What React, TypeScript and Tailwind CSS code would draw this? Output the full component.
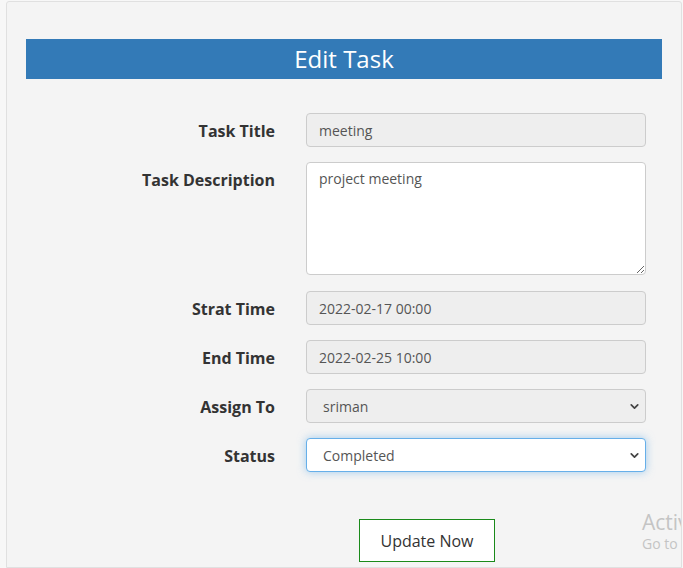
import { ChevronDown } from "lucide-react"

const fieldBase =
  "w-[340px] h-[34px] border border-[#ccc] rounded-[4px] text-[14px] text-[#555] px-3 flex items-center"

function Label({ text }: { text: string }) {
  return (
    <label className="w-[250px] pr-px text-right font-bold text-[16px] text-[#333] pt-[6px] leading-[24px] shrink-0">
      {text}
    </label>
  )
}

function SelectBox({ value, focus }: { value: string; focus?: boolean }) {
  return (
    <div className="relative w-[340px]">
      <select
        defaultValue={value}
        className={
          "appearance-none w-full h-[34px] rounded-[4px] text-[14px] text-[#555] pl-4 pr-8 outline-none " +
          (focus
            ? "bg-white border border-[#66afe9] shadow-[0_0_8px_rgba(102,175,233,0.6)]"
            : "bg-[#eee] border border-[#ccc]")
        }
      >
        <option>{value}</option>
      </select>
      <ChevronDown
        size={13}
        strokeWidth={3.2}
        className="absolute right-[5px] top-[11px] text-[#444] pointer-events-none"
      />
    </div>
  )
}

const App = () => {
  return (
    <main
      className="min-h-screen bg-[#f7f7f7] pl-[6px] pr-px pt-px"
      style={{ fontFamily: '"Open Sans", "Liberation Sans", sans-serif' }}
    >
      <div className="relative overflow-hidden min-h-[567px] bg-[#f4f4f4] border border-[#e0e0e0] rounded-t-[3px] px-[19px] pt-[37px]">
        <div className="h-[40px] bg-[#337ab7] text-white text-[24px] flex items-center justify-center">
          Edit Task
        </div>

        <form className="flex flex-col gap-[15px] mt-[34px]">
          <div className="flex gap-[30px]">
            <Label text="Task Title" />
            <div className={fieldBase + " bg-[#eee]"}>meeting</div>
          </div>
          <div className="flex gap-[30px]">
            <Label text="Task Description" />
            <textarea
              defaultValue="project meeting"
              className="w-[340px] h-[113px] bg-white border border-[#ccc] rounded-[4px] text-[14px] text-[#555] px-3 py-[5px] outline-none"
            />
          </div>
          <div className="flex gap-[30px] mt-px">
            <Label text="Strat Time" />
            <div className={fieldBase + " bg-[#eee]"}>2022-02-17 00:00</div>
          </div>
          <div className="flex gap-[30px]">
            <Label text="End Time" />
            <div className={fieldBase + " bg-[#eee]"}>2022-02-25 10:00</div>
          </div>
          <div className="flex gap-[30px]">
            <Label text="Assign To" />
            <SelectBox value="sriman" />
          </div>
          <div className="flex gap-[30px]">
            <Label text="Status" />
            <SelectBox value="Completed" focus />
          </div>
        </form>

        <button className="ml-[333px] mt-[47px] w-[136px] h-[43px] bg-white border border-[#1a8a1a] text-[16px] text-[#333]">
          Update Now
        </button>

        <div className="absolute left-[635px] top-[507px] text-[#c4c4c4] whitespace-nowrap pointer-events-none">
          <div className="text-[21px] leading-[26px]">Activate Windows</div>
          <div className="text-[14px] leading-[18px]">Go to Settings</div>
        </div>
      </div>
    </main>
  )
}

export default App
